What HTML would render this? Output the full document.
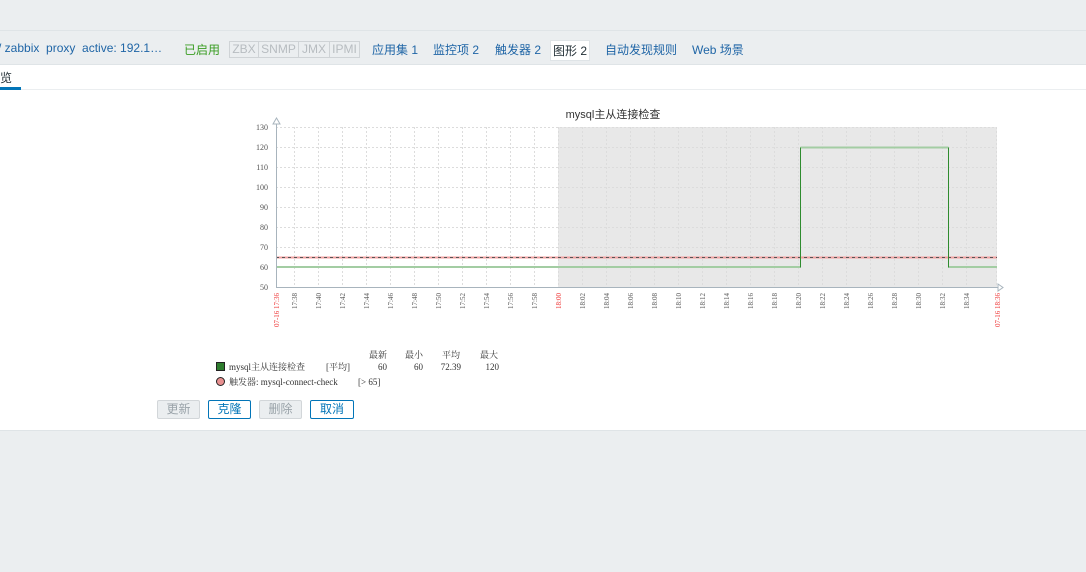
<!DOCTYPE html>
<html><head><meta charset="utf-8"><style>
body{margin:0;width:1086px;height:572px;background:#ebeef0;font-family:"Liberation Sans","Noto Sans CJK SC",sans-serif;position:relative;overflow:hidden}
.nav{position:absolute;top:30px;left:0;width:1086px;height:33px;border-top:1px solid #dfe4e7;border-bottom:1px solid #dfe4e7;background:#ebeef0;font-size:12px;color:#1f65a6}
.nav span{position:absolute;top:10px;white-space:nowrap}
.main{position:absolute;top:65px;left:0;width:1086px;height:365px;background:#fff;border-bottom:1px solid #dfe4e7}
.tabs{position:absolute;top:0;left:0;width:1086px;height:24px;border-bottom:1px solid #ebeef0}
.btn{position:absolute;top:335px;height:17px;font-size:12px;line-height:17px;text-align:center;border:1px solid #0275b8;color:#0275b8;background:#fff;border-radius:2px}
.dis{border-color:#d2d6d9;color:#9aa3a9;background:#ebeef0}
.av{position:absolute;top:41px;height:15px;line-height:15px;font-size:12px;color:#b7bcc0;border:1px solid #cfd3d6;text-align:center}
</style></head><body>
<div class="nav">
<span style="left:-2px">/ zabbix&nbsp; proxy&nbsp; active: 192.1…</span>
<span style="left:184px;color:#3a9d23">已启用</span>
<span style="left:372px">应用集 1</span>
<span style="left:433px">监控项 2</span>
<span style="left:495px">触发器 2</span>
<span style="left:550px;top:9px;background:#fff;padding:1px 2px;border:1px solid #dfe4e7;color:#1f2c33">图形 2</span>
<span style="left:605px">自动发现规则</span>
<span style="left:692px">Web 场景</span>
</div>
<div class="av" style="left:229px;width:28px">ZBX</div>
<div class="av" style="left:258px;width:39px">SNMP</div>
<div class="av" style="left:298px;width:30px">JMX</div>
<div class="av" style="left:329px;width:29px">IPMI</div>
<div class="main">
<div class="tabs"><span style="position:absolute;left:0;top:4px;font-size:12px;color:#1f2c33">览</span><div style="position:absolute;left:0;top:22px;width:21px;height:3px;background:#0275b8"></div></div>
<svg style="position:absolute;left:0;top:0" width="1086" height="365" font-family="Liberation Serif, Noto Serif CJK SC, serif">
<g transform="translate(0,-65)">
<text x="613" y="118" font-size="11" fill="#333" text-anchor="middle" font-family="Liberation Sans, Noto Sans CJK SC, sans-serif">mysql主从连接检查</text>
<rect x="558" y="127" width="439" height="160" fill="#e8e8e8"/>
<g stroke="#dcdcdc" stroke-dasharray="2,2" stroke-width="1">
<line x1="276" x2="997" y1="127.5" y2="127.5"/><line x1="276" x2="997" y1="147.5" y2="147.5"/><line x1="276" x2="997" y1="167.5" y2="167.5"/><line x1="276" x2="997" y1="187.5" y2="187.5"/><line x1="276" x2="997" y1="207.5" y2="207.5"/><line x1="276" x2="997" y1="227.5" y2="227.5"/><line x1="276" x2="997" y1="247.5" y2="247.5"/>
<path d="M294.5 127V287M318.5 127V287M342.5 127V287M366.5 127V287M390.5 127V287M414.5 127V287M438.5 127V287M462.5 127V287M486.5 127V287M510.5 127V287M534.5 127V287M558.5 127V287M582.5 127V287M606.5 127V287M630.5 127V287M654.5 127V287M678.5 127V287M702.5 127V287M726.5 127V287M750.5 127V287M774.5 127V287M798.5 127V287M822.5 127V287M846.5 127V287M870.5 127V287M894.5 127V287M918.5 127V287M942.5 127V287M966.5 127V287M996.5 127V287"/>
</g>
<line x1="276" x2="997" y1="257.5" y2="257.5" stroke="#f2a0a0" stroke-width="2"/>
<line x1="276" x2="997" y1="257.5" y2="257.5" stroke="#555" stroke-dasharray="3,3" stroke-width="1"/>
<path d="M277 267H800.5M948.5 267H997M800.5 147.5H948.5" fill="none" stroke="#a3cda3" stroke-width="2"/>
<path d="M800.5 267.5V147.5M948.5 147.5V267.5" fill="none" stroke="#2e8b2e" stroke-width="1"/>
<path d="M276.5 121V287.5H1002" fill="none" stroke="#a8b4bd"/>
<path d="M273 124L276.5 118L280 124Z M998 284L1003 287.5L998 291Z" fill="#fff" stroke="#a8b4bd"/>
<g font-size="8" fill="#555" text-anchor="end">
<text x="268" y="130">130</text><text x="268" y="150">120</text><text x="268" y="170">110</text><text x="268" y="190">100</text><text x="268" y="210">90</text><text x="268" y="230">80</text><text x="268" y="250">70</text><text x="268" y="270">60</text><text x="268" y="290">50</text>
</g>
<g font-size="7" fill="#555" text-anchor="end">
<text transform="translate(297,293) rotate(-90)">17:38</text><text transform="translate(321,293) rotate(-90)">17:40</text><text transform="translate(345,293) rotate(-90)">17:42</text><text transform="translate(369,293) rotate(-90)">17:44</text><text transform="translate(393,293) rotate(-90)">17:46</text><text transform="translate(417,293) rotate(-90)">17:48</text><text transform="translate(441,293) rotate(-90)">17:50</text><text transform="translate(465,293) rotate(-90)">17:52</text><text transform="translate(489,293) rotate(-90)">17:54</text><text transform="translate(513,293) rotate(-90)">17:56</text><text transform="translate(537,293) rotate(-90)">17:58</text>
<text transform="translate(561,293) rotate(-90)" fill="#e33">18:00</text>
<text transform="translate(585,293) rotate(-90)">18:02</text><text transform="translate(609,293) rotate(-90)">18:04</text><text transform="translate(633,293) rotate(-90)">18:06</text><text transform="translate(657,293) rotate(-90)">18:08</text><text transform="translate(681,293) rotate(-90)">18:10</text><text transform="translate(705,293) rotate(-90)">18:12</text><text transform="translate(729,293) rotate(-90)">18:14</text><text transform="translate(753,293) rotate(-90)">18:16</text><text transform="translate(777,293) rotate(-90)">18:18</text><text transform="translate(801,293) rotate(-90)">18:20</text><text transform="translate(825,293) rotate(-90)">18:22</text><text transform="translate(849,293) rotate(-90)">18:24</text><text transform="translate(873,293) rotate(-90)">18:26</text><text transform="translate(897,293) rotate(-90)">18:28</text><text transform="translate(921,293) rotate(-90)">18:30</text><text transform="translate(945,293) rotate(-90)">18:32</text><text transform="translate(969,293) rotate(-90)">18:34</text>
<text transform="translate(279,293) rotate(-90)" fill="#e33">07-16 17:36</text>
<text transform="translate(1000,293) rotate(-90)" fill="#e33">07-16 18:36</text>
</g>
<g font-size="9" fill="#333">
<text x="369" y="358">最新</text><text x="405" y="358">最小</text><text x="442" y="358">平均</text><text x="480" y="358">最大</text>
<rect x="216.5" y="362.5" width="8" height="8" fill="#2e7d2e" stroke="#222"/>
<text x="229" y="370">mysql主从连接检查</text><text x="326" y="370">[平均]</text>
<text x="387" y="370" text-anchor="end">60</text><text x="423" y="370" text-anchor="end">60</text><text x="461" y="370" text-anchor="end">72.39</text><text x="499" y="370" text-anchor="end">120</text>
<circle cx="220.5" cy="381.5" r="4" fill="#e89090" stroke="#222"/>
<text x="229" y="385">触发器: mysql-connect-check</text><text x="358" y="385">[&gt; 65]</text>
</g>
</g>
</svg>
<div class="btn dis" style="left:157px;width:41px">更新</div>
<div class="btn" style="left:208px;width:41px">克隆</div>
<div class="btn dis" style="left:259px;width:41px">删除</div>
<div class="btn" style="left:310px;width:42px">取消</div>
</div>
</body></html>
